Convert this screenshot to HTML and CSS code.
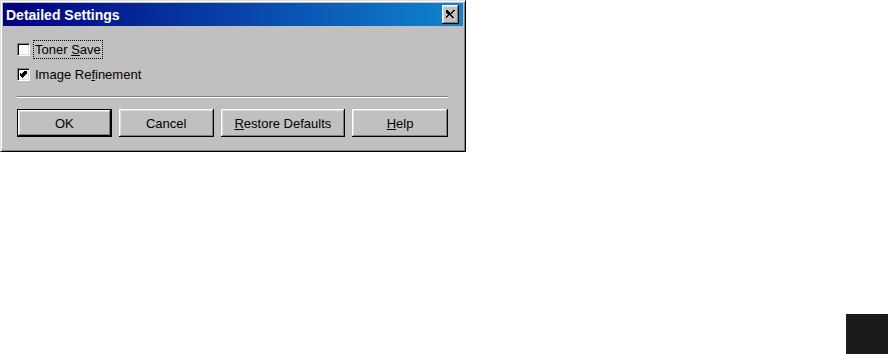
FILE: index.html
```html
<html>
  <head>
    <link rel="stylesheet" href="styles.css">
  </head>
  <body>
    <div class="dialog">
      <div class="titlebar">
        <span class="title">Detailed Settings</span>
        <button class="btn-close">
          <svg width="9" height="8" viewBox="0 0 9 8">
            <path d="M0 0h2v1h1v1h1v1h1v-1h1v-1h1v-1h2v1h-1v1h-1v1h-1v1h-1v1h1v1h1v1h1v1h-2v-1h-1v-1h-1v-1h-1v1h-1v1h-1v1h-2v-1h1v-1h1v-1h1v-1h-1v-1h-1v-1h-1z" fill="#000"/>
          </svg>
        </button>
      </div>
      <div class="content">
        <div class="check-row">
          <span class="checkbox"></span>
          <span class="check-label focused">Toner <u>S</u>ave</span>
        </div>
        <div class="check-row">
          <span class="checkbox">
            <svg width="7" height="7" viewBox="0 0 7 7">
              <path d="M6 0h1v3h-1v1h-1v1h-1v1h-1v1h-1v-1h-1v-1h-1v-1h-1v-3h1v1h1v1h1v-1h1v-1h1v-1h1z" fill="#000"/>
            </svg>
          </span>
          <span class="check-label">Image Re<u>f</u>inement</span>
        </div>
        <div class="separator"></div>
        <div class="buttons">
          <button class="btn default w-95">OK</button>
          <button class="btn w-95">Cancel</button>
          <button class="btn w-125"><u>R</u>estore Defaults</button>
          <button class="btn w-96"><u>H</u>elp</button>
        </div>
      </div>
    </div>
    <div class="corner-block"></div>
  </body>
</html>
```

FILE: styles.css
```css
html {
  height: 100%;
}
body {
  margin: 0;
  padding: 0;
  background-color: #fff;
  font-family: "Liberation Sans", Arial, sans-serif;
  font-size: 13px;
  width: 100%;
  height: 100%;
}
.dialog {
  width: 466px;
  height: 152px;
  box-sizing: border-box;
  background-color: #c0c0c0;
  border: 1px solid;
  border-color: #dfdfdf #000 #000 #dfdfdf;
  box-shadow: inset 1px 1px #fff, inset -1px -1px #808080;
  padding: 2px;
  display: flex;
  flex-direction: column;
}
.titlebar {
  height: 23px;
  display: flex;
  align-items: center;
  justify-content: space-between;
  background: linear-gradient(to right, #000080, #1084d0);
  padding: 0 4px 0 3px;
}
.title {
  color: #fff;
  font-weight: bold;
  font-size: 14px;
}
.btn-close {
  width: 17px;
  height: 19px;
  padding: 0;
  margin: 0;
  background-color: #c0c0c0;
  border: none;
  box-shadow: inset -1px -1px #000, inset 1px 1px #fff, inset -2px -2px #808080, inset 2px 2px #dfdfdf;
  display: flex;
  align-items: center;
  justify-content: center;
}
.btn-close svg {
  margin-top: -1px;
}
.content {
  padding: 14px 15px 0 14px;
  display: flex;
  flex-direction: column;
}
.check-row {
  height: 19px;
  display: flex;
  align-items: center;
  margin-bottom: 6px;
}
.checkbox {
  width: 13px;
  height: 13px;
  box-sizing: border-box;
  background-color: #fff;
  border: 1px solid;
  border-color: #808080 #fff #fff #808080;
  box-shadow: inset 1px 1px #000, inset -1px -1px #dfdfdf;
  display: flex;
  align-items: center;
  justify-content: center;
  margin-right: 3px;
}
.check-label {
  padding: 1px;
  line-height: 15px;
  border: 1px solid transparent;
  color: #000;
}
.check-label.focused {
  border: 1px dotted #000;
}
.separator {
  height: 1px;
  background-color: #808080;
  border-bottom: 1px solid #fff;
  margin-top: 6px;
}
.buttons {
  display: flex;
  gap: 7px;
  margin-top: 11px;
}
.btn {
  height: 28px;
  padding: 0;
  margin: 0;
  font-family: "Liberation Sans", Arial, sans-serif;
  font-size: 13px;
  color: #000;
  background-color: #c0c0c0;
  border: none;
  box-shadow: inset -1px -1px #000, inset 1px 1px #fff, inset -2px -2px #808080, inset 2px 2px #dfdfdf;
}
.btn.default {
  border: 1px solid #000;
}
.w-95 {
  width: 95px;
}
.w-96 {
  width: 96px;
}
.w-125 {
  width: 125px;
}
.corner-block {
  position: fixed;
  right: 0;
  bottom: 0;
  width: 42px;
  height: 40px;
  background-color: #1b1b1b;
}
```
